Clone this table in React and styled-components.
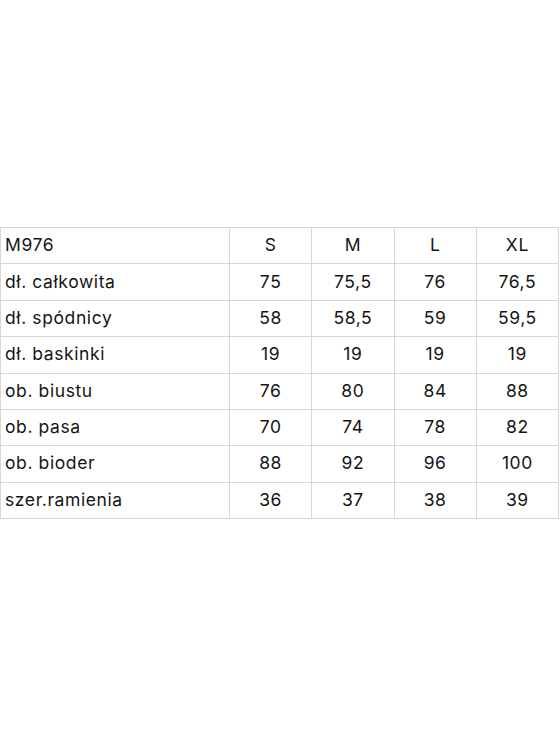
import React from "react";
import styled, { createGlobalStyle } from "styled-components";

const GlobalStyle = createGlobalStyle`
  html, body {
    margin: 0;
    padding: 0;
    background: #fff;
  }
`;

const Page = styled.div`
  min-height: 746px;
  display: flex;
  align-items: center;
  width: 560px;
`;

const Table = styled.table`
  width: 559px;
  border-collapse: collapse;
  table-layout: fixed;
  font-family: Inter, "Liberation Sans", sans-serif;
  font-size: 17.5px;
  letter-spacing: 0.6px;
  color: #151515;
`;

const Row = styled.tr`
  height: 36.4px;
`;

const Cell = styled.td`
  box-sizing: border-box;
  padding: 0 0 2px ${({ first }) => (first ? "4px" : "0")};
  border: 1px solid #d6d6d6;
  text-align: ${({ first }) => (first ? "left" : "center")};
  width: ${({ first }) => (first ? "229px" : "auto")};
  white-space: nowrap;
`;

const header = ["M976", "S", "M", "L", "XL"];

const rows = [
  ["dł. całkowita", "75", "75,5", "76", "76,5"],
  ["dł. spódnicy", "58", "58,5", "59", "59,5"],
  ["dł. baskinki", "19", "19", "19", "19"],
  ["ob. biustu", "76", "80", "84", "88"],
  ["ob. pasa", "70", "74", "78", "82"],
  ["ob. bioder", "88", "92", "96", "100"],
  ["szer.ramienia", "36", "37", "38", "39"],
];

export default function App() {
  return (
    <>
      <GlobalStyle />
      <Page>
        <Table>
          <tbody>
            {[header, ...rows].map((row, i) => (
              <Row key={i}>
                {row.map((val, j) => (
                  <Cell key={j} first={j === 0}>
                    {val}
                  </Cell>
                ))}
              </Row>
            ))}
          </tbody>
        </Table>
      </Page>
    </>
  );
}
